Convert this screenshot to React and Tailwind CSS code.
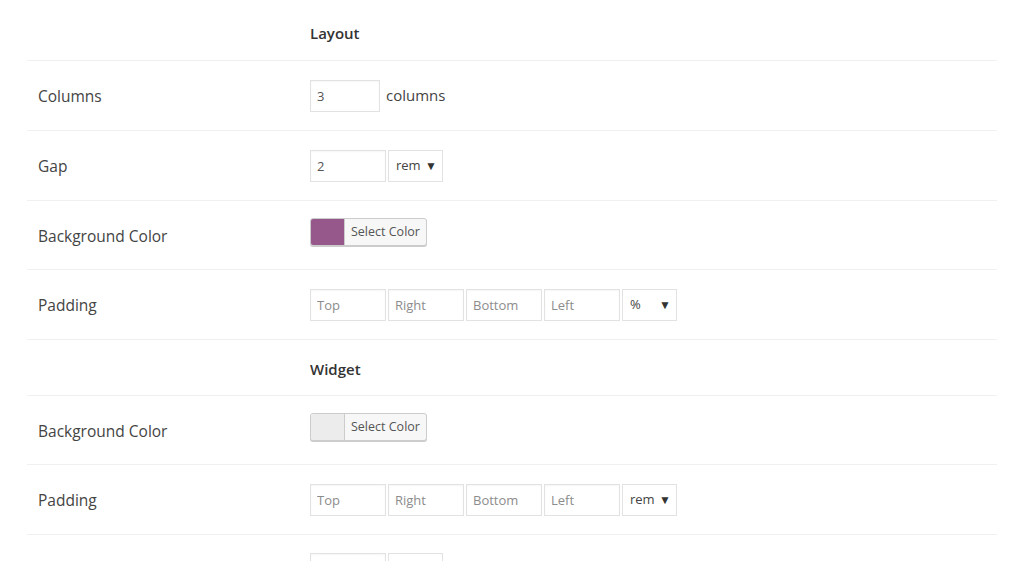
import React from 'react';

const font = { fontFamily: '"Segoe UI", "Open Sans", "Noto Sans", sans-serif' };

const TextBox = ({ value, placeholder, w = 'w-[76px]' }) => (
  <input
    type="text"
    defaultValue={value}
    placeholder={placeholder}
    className={`${w} h-8 border border-[#e2e2e2] bg-white px-[6px] text-[13px] text-[#555] placeholder:text-[#8c8c8c] shadow-[inset_0_1px_2px_rgba(0,0,0,0.04)] outline-none`}
  />
);

const Select = ({ value, arrow = true }) => (
  <div className="w-[55px] h-8 border border-[#e2e2e2] bg-white flex items-center justify-between pl-[7px] pr-[5px] text-[13px] text-[#444]">
    <span>{value}</span>
    {arrow && <span className="text-[12px] text-[#333]">▼</span>}
  </div>
);

const ColorButton = ({ color }) => (
  <button className="mb-[6px] flex h-[28px] items-stretch rounded-[3px] border border-[#cccccc] bg-[#f7f7f7] shadow-[0_1px_0_#cccccc] overflow-hidden">
    <span className="w-[34px] border-r border-[#cccccc]" style={{ backgroundColor: color }} />
    <span className="flex items-center px-[6px] text-[12.5px] text-[#555]">Select Color</span>
  </button>
);

const Row = ({ label, h = 'h-[70px]', children }) => (
  <div className={`flex items-center border-b border-[#f0f0f0] ${h}`}>
    <div className="w-[283px] pl-[11px] pt-[3px] text-[15.5px] text-[#444]">{label}</div>
    <div className="flex items-center gap-[2px]">{children}</div>
  </div>
);

const Heading = ({ children, h }) => (
  <div className={`flex items-center border-b border-[#f0f0f0] ${h}`}>
    <div className="w-[283px]" />
    <h3 className="text-[15px] font-semibold text-[#333]">{children}</h3>
  </div>
);

const PaddingInputs = ({ unit }) => (
  <>
    <TextBox placeholder="Top" />
    <TextBox placeholder="Right" />
    <TextBox placeholder="Bottom" />
    <TextBox placeholder="Left" />
    <Select value={unit} />
  </>
);

export default function App() {
  return (
    <div className="min-h-[561px] bg-white overflow-hidden" style={font}>
      <div className="ml-[27px] w-[970px]">
        <Heading h="h-[61px] pt-[6px]">Layout</Heading>
        <Row label="Columns">
          <TextBox value="3" w="w-[70px]" />
          <span className="ml-[4px] text-[15px] text-[#444]">columns</span>
        </Row>
        <Row label="Gap">
          <TextBox value="2" />
          <Select value="rem" />
        </Row>
        <Row label="Background Color" h="h-[69px]">
          <ColorButton color="#96588a" />
        </Row>
        <Row label="Padding">
          <PaddingInputs unit="%" />
        </Row>
        <Heading h="h-[56px] pt-[4px]">Widget</Heading>
        <Row label="Background Color" h="h-[69px]">
          <ColorButton color="#ececec" />
        </Row>
        <Row label="Padding">
          <PaddingInputs unit="rem" />
        </Row>
        <div className="flex pt-[18px]">
          <div className="w-[283px]" />
          <div className="flex items-center gap-[2px]">
            <TextBox value="" />
            <Select value="" arrow={false} />
          </div>
        </div>
      </div>
    </div>
  );
}
